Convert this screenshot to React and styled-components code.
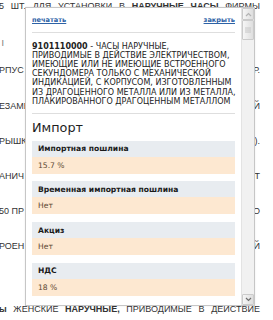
import styled, { createGlobalStyle } from 'styled-components';

const GlobalStyle = createGlobalStyle`
  html, body {
    margin: 0;
    padding: 0;
    background: #fff;
    overflow: hidden;
  }
`;

const Page = styled.div`
  position: relative;
  width: 273px;
  height: 320px;
  overflow: hidden;
  padding-top: 1.2px;
  box-sizing: border-box;
  font-family: 'Liberation Sans', Arial, sans-serif;
  font-size: 9px;
  color: #333;
`;

const TextRow = styled.div`
  display: flex;
  justify-content: space-between;
  width: 261px;
  margin-left: -1px;
  height: ${(p) => p.$h}px;
  line-height: 11px;
  white-space: nowrap;
`;

const Word = styled.span`
  font-weight: ${(p) => (p.$bold ? 700 : 400)};
  color: ${(p) => (p.$faint ? '#777' : 'inherit')};
`;

const Popup = styled.div`
  position: absolute;
  left: 25px;
  top: 7px;
  width: 230px;
  height: 299px;
  box-sizing: border-box;
  border: 1px solid #c6c6c6;
  background: #fff;
  display: flex;
  box-shadow: 0 0 2px rgba(0, 0, 0, 0.08);
`;

const Content = styled.div`
  flex: 1;
  min-width: 0;
  padding: 0 6px;
  overflow: hidden;
  font-family: 'DejaVu Sans', Verdana, sans-serif;
  color: #222;
`;

const LinkBar = styled.div`
  height: 24px;
  display: flex;
  justify-content: space-between;
  align-items: center;
  border-bottom: 1px solid #dedede;
`;

const ActionLink = styled.a`
  font-size: 6.6px;
  font-weight: 700;
  color: #2d62a6;
  text-decoration: underline;
  cursor: pointer;
`;

const Description = styled.div`
  margin: 8.5px 0 0;
  padding-bottom: 6.8px;
  border-bottom: 1px solid #dedede;
  font-size: 8px;
  line-height: 9.2px;

  b {
    font-weight: 700;
  }
`;

const DescLine = styled.div`
  white-space: nowrap;
`;

const Heading = styled.h2`
  margin: 6.6px 0 5.4px;
  font-size: 12.8px;
  line-height: 15px;
  font-weight: 400;
  color: #1e1e1e;
`;

const Field = styled.div`
  margin-bottom: 7.7px;
`;

const FieldLabel = styled.div`
  height: 16px;
  display: flex;
  align-items: center;
  padding-left: 6px;
  background: #e8ecf0;
  font-size: 7.6px;
  font-weight: 700;
  color: #1a1a1a;
`;

const FieldValue = styled.div`
  height: 17px;
  display: flex;
  align-items: center;
  padding-left: 6px;
  background: #fde8d1;
  font-size: 7.6px;
  color: #5a4630;
`;

const ScrollBar = styled.div`
  width: 13px;
  flex: none;
  display: flex;
  flex-direction: column;
  background: #f1f1f1;
  border-left: 1px solid #e3e3e3;
  box-sizing: border-box;
`;

const ScrollPart = styled.div`
  height: ${(p) => p.$h}px;
  box-sizing: border-box;
  border: 1px solid #cbcbcb;
  border-radius: 1px;
  background: linear-gradient(90deg, #f6f6f6, #dedede);
  display: flex;
  align-items: center;
  justify-content: center;
`;

const Track = styled.div`
  flex: 1;
`;

const rows = [
  {
    h: 36.5,
    words: [
      ['5'],
      ['ШТ.'],
      ['ДЛЯ'],
      ['УСТАНОВКИ'],
      ['В'],
      ['НАРУЧНЫЕ', true],
      ['ЧАСЫ', true],
      ['ФИРМЫ'],
    ],
  },
  { h: 27.7, words: [['\u00a0І', false, true]] },
  { h: 35.3, words: [['РПУС'], ['Р.']] },
  { h: 35, words: [['ЕЗАМЕ'], ['Й']] },
  { h: 35, words: [['РЫШКИ'], [').']] },
  { h: 35, words: [['АНИЧ'], ['Т']] },
  { h: 35.5, words: [['50 ПР'], ['О']] },
  { h: 63, words: [['РОЕН'], ['Й']] },
  {
    h: 14,
    words: [
      ['ы', true],
      ['ЖЕНСКИЕ'],
      ['НАРУЧНЫЕ,', true],
      ['ПРИВОДИМЫЕ'],
      ['В'],
      ['ДЕЙСТВИЕ'],
    ],
  },
];

const descLines = [
  'ПРИВОДИМЫЕ В ДЕЙСТВИЕ ЭЛЕКТРИЧЕСТВОМ,',
  'ИМЕЮЩИЕ ИЛИ НЕ ИМЕЮЩИЕ ВСТРОЕННОГО',
  'СЕКУНДОМЕРА ТОЛЬКО С МЕХАНИЧЕСКОЙ',
  'ИНДИКАЦИЕЙ, С КОРПУСОМ, ИЗГОТОВЛЕННЫМ',
  'ИЗ ДРАГОЦЕННОГО МЕТАЛЛА ИЛИ ИЗ МЕТАЛЛА,',
  'ПЛАКИРОВАННОГО ДРАГОЦЕННЫМ МЕТАЛЛОМ',
];

const fields = [
  { label: 'Импортная пошлина', value: '15.7 %' },
  { label: 'Временная импортная пошлина', value: 'Нет' },
  { label: 'Акциз', value: 'Нет' },
  { label: 'НДС', value: '18 %' },
];

const Chevron = ({ up }) => (
  <svg width="7" height="5" viewBox="0 0 7 5">
    <path
      d={up ? 'M1 4 L3.5 1.5 L6 4' : 'M1 1 L3.5 3.5 L6 1'}
      fill="none"
      stroke={up ? '#b4b4b4' : '#6f6f6f'}
      strokeWidth="1.2"
    />
  </svg>
);

const Grip = () => (
  <svg width="6" height="6" viewBox="0 0 6 6">
    <path d="M0 1h6M0 3h6M0 5h6" stroke="#bdbdbd" strokeWidth="0.8" />
  </svg>
);

export default function App() {
  return (
    <>
      <GlobalStyle />
      <Page>
        {rows.map((row, i) => (
          <TextRow key={i} $h={row.h}>
            {row.words.map(([text, bold, faint], j) => (
              <Word key={j} $bold={bold} $faint={faint}>
                {text}
              </Word>
            ))}
          </TextRow>
        ))}

        <Popup>
          <Content>
            <LinkBar>
              <ActionLink>печатать</ActionLink>
              <ActionLink>закрыть</ActionLink>
            </LinkBar>
            <Description>
              <DescLine>
                <b>9101110000</b> - ЧАСЫ НАРУЧНЫЕ,
              </DescLine>
              {descLines.map((line) => (
                <DescLine key={line}>{line}</DescLine>
              ))}
            </Description>
            <Heading>Импорт</Heading>
            {fields.map((f) => (
              <Field key={f.label}>
                <FieldLabel>{f.label}</FieldLabel>
                <FieldValue>{f.value}</FieldValue>
              </Field>
            ))}
          </Content>
          <ScrollBar>
            <ScrollPart $h={12}>
              <Chevron up />
            </ScrollPart>
            <ScrollPart $h={20}>
              <Grip />
            </ScrollPart>
            <Track />
            <ScrollPart $h={11}>
              <Chevron />
            </ScrollPart>
          </ScrollBar>
        </Popup>
      </Page>
    </>
  );
}
